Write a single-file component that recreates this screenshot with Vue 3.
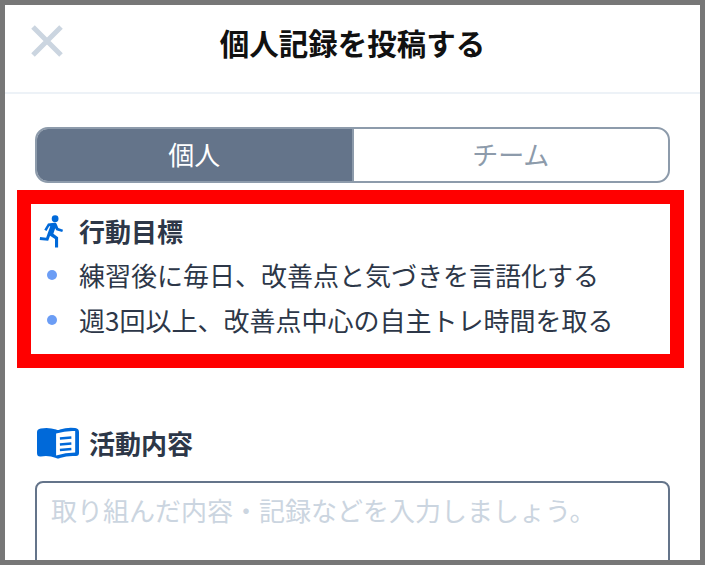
<template>
  <div class="frame">
    <header class="header">
      <button class="close-button" aria-label="閉じる">
        <svg viewBox="0 0 34 34" class="close-icon">
          <path d="M3 3 L31 31 M31 3 L3 31" />
        </svg>
      </button>
      <h1 class="title">個人記録を投稿する</h1>
    </header>

    <main class="body">
      <div class="tabs">
        <div
          v-for="tab in tabs"
          :key="tab.label"
          class="tab"
          :class="{ active: tab.active }"
        >
          {{ tab.label }}
        </div>
      </div>

      <!-- annotation box around the goals -->
      <section class="goals">
        <div class="goals-head">
          <svg viewBox="0 0 24 32" class="run-icon">
            <circle cx="15.5" cy="3.6" r="3.3" />
            <path d="M8.6 8.2 L14.6 7.4 Q16.4 7.2 17 8.8 L18.6 12.6 L23.2 14.2 L22.4 16.6 L16.6 14.8 L15.6 12.8 L13.8 18.2 L18.4 21.6 L18.4 31.6 L15.4 31.6 L15.4 23.2 L10.6 20.2 L8.8 25 L0.6 24.2 L0.9 21.4 L6.8 22 L10.8 10.8 L9.8 11 L7.2 15.4 L5 14.2 Z" />
          </svg>
          <span class="goals-title">行動目標</span>
        </div>
        <ul class="goals-list">
          <li v-for="goal in goals" :key="goal" class="goal">
            <span class="dot"></span>
            <span>{{ goal }}</span>
          </li>
        </ul>
      </section>

      <section class="activity">
        <div class="activity-head">
          <svg viewBox="0 0 44 32" preserveAspectRatio="none" class="book-icon">
            <path class="book-fill" d="M4 1.5 Q12 0 20 2.5 Q22 3.5 24 2.5 Q32 0 40 1 Q44 1.5 44 5 L44 26 Q44 29.5 40 29 Q32 28.5 24 31 Q22 32 20 31 Q12 28 4 29.5 Q0 30 0 26 L0 5 Q0 2 4 1.5 Z" />
            <path class="book-page" d="M20 6.5 Q30 3.5 40 4 L40 25.5 Q30 25.5 20 28.5 Z" />
            <path class="book-rows" d="M24 11.5 L36 10.5 M24 17.5 L36 16.5 M24 23 L36 22" />
          </svg>
          <span class="activity-title">活動内容</span>
        </div>
        <textarea class="input" placeholder="取り組んだ内容・記録などを入力しましょう。"></textarea>
      </section>
    </main>
  </div>
</template>

<script setup>
const tabs = [
  { label: '個人', active: true },
  { label: 'チーム', active: false }
]

const goals = [
  '練習後に毎日、改善点と気づきを言語化する',
  '週3回以上、改善点中心の自主トレ時間を取る'
]
</script>

<style>
html,
body {
  margin: 0;
  background: #fff;
}
</style>

<style scoped>
.frame {
  width: 705px;
  height: 565px;
  box-sizing: border-box;
  border: 5px solid #777;
  overflow: hidden;
  background: #fff;
  color: #2d3748;
  font-family: "Noto Sans CJK JP", "Noto Sans", sans-serif;
}

.header {
  position: relative;
  height: 89px;
  box-sizing: border-box;
  display: flex;
  align-items: center;
  justify-content: center;
  border-bottom: 2px solid #edf2f7;
  padding-bottom: 12px;
}

.close-button {
  position: absolute;
  left: 25px;
  top: 19px;
  width: 34px;
  height: 34px;
  padding: 0;
  border: 0;
  background: none;
}

.close-icon {
  display: block;
  width: 34px;
  height: 34px;
  fill: none;
  stroke: #cbd5e0;
  stroke-width: 5;
}

.title {
  margin: 0;
  font-size: 29.5px;
  font-weight: 700;
  line-height: 1.3;
  color: #111;
}

.body {
  padding: 33px 30px 0;
}

.tabs {
  display: flex;
  height: 56px;
  box-sizing: border-box;
  border: 2px solid #8d9bab;
  border-radius: 13px;
  overflow: hidden;
}

.tab {
  flex: 1;
  display: flex;
  align-items: center;
  justify-content: center;
  padding-bottom: 3px;
  font-size: 26px;
  color: #8d9bab;
}

.tab.active {
  background: #64748a;
  border-right: 2px solid #8d9bab;
  color: #fff;
}

.goals {
  margin: 7px -14px 0 -18px;
  height: 178px;
  box-sizing: border-box;
  border: 14px solid #f00;
  padding: 6px 6px 0 8px;
  background: #fff;
}

.goals-head {
  display: flex;
  align-items: center;
  gap: 15px;
  height: 42px;
}

.run-icon {
  width: 25px;
  height: 33px;
  fill: #0069d9;
}

.goals-title,
.activity-title {
  font-size: 26px;
  font-weight: 700;
  line-height: 1.45;
}

.goals-list {
  list-style: none;
  margin: 0;
  padding: 0;
}

.goal {
  display: flex;
  align-items: center;
  height: 45px;
  font-size: 26px;
  white-space: nowrap;
}

.dot {
  width: 10px;
  height: 10px;
  margin: 0 22px 0 8px;
  border-radius: 50%;
  background: #6b9df5;
}

.activity {
  margin-top: 55px;
}

.activity-head {
  display: flex;
  align-items: center;
  gap: 10px;
  height: 40px;
  padding-left: 2px;
}

.book-icon {
  width: 42px;
  height: 32px;
}

.book-fill {
  fill: #0069d9;
}

.book-page {
  fill: #fff;
}

.book-rows {
  fill: none;
  stroke: #0069d9;
  stroke-width: 2.4;
}

.input {
  display: block;
  width: 100%;
  height: 150px;
  margin-top: 18px;
  box-sizing: border-box;
  padding: 8px 14px;
  border: 2px solid #64748a;
  border-radius: 8px;
  font-family: inherit;
  font-size: 26px;
  outline: none;
  resize: none;
}

.input::placeholder {
  color: #cbd5e0;
  opacity: 1;
}
</style>
